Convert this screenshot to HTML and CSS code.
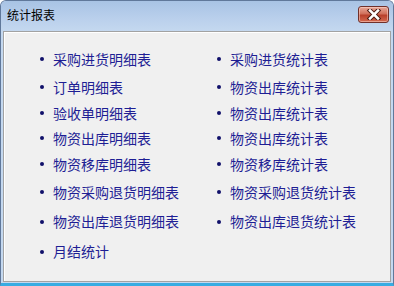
FILE: index.html
```html
<!DOCTYPE html>
<html lang="zh-CN">

<head>
    <meta charset="UTF-8">
    <meta name="viewport" content="width=device-width, initial-scale=1.0">
    <title>统计报表</title>
    <link rel="stylesheet" href="styles.css">
</head>

<body>
    <div class="window">
        <!-- 标题栏 -->
        <div class="titlebar">
            <span class="title">统计报表</span>
            <div class="close">
                <svg width="16" height="11" viewBox="0 0 16 11">
                    <path d="M4 1.5 L12 9.5 M12 1.5 L4 9.5" stroke="#4a1a12" stroke-width="4.5" stroke-linecap="square" />
                    <path d="M4 1.5 L12 9.5 M12 1.5 L4 9.5" stroke="#ffffff" stroke-width="2.5" stroke-linecap="square" />
                </svg>
            </div>
        </div>
        <!-- 报表列表 -->
        <div class="panel">
            <ul class="reports">
                <li>采购进货明细表</li>
                <li>采购进货统计表</li>
                <li>订单明细表</li>
                <li>物资出库统计表</li>
                <li>验收单明细表</li>
                <li>物资出库统计表</li>
                <li>物资出库明细表</li>
                <li>物资出库统计表</li>
                <li>物资移库明细表</li>
                <li>物资移库统计表</li>
                <li>物资采购退货明细表</li>
                <li>物资采购退货统计表</li>
                <li>物资出库退货明细表</li>
                <li>物资出库退货统计表</li>
                <li>月结统计</li>
            </ul>
        </div>
    </div>
</body>

</html>
```

FILE: styles.css
```css
:root {
    --frame-color: #c4d8ef;
    --link-color: #1e1e94;
}

* {
    margin: 0;
    padding: 0;
    box-sizing: border-box;
}

body {
    width: 394px;
    height: 286px;
    overflow: hidden;
    font-family: "Noto Sans CJK SC", "Noto Sans", sans-serif;
}

.window {
    display: flex;
    flex-direction: column;
    height: 286px;
    background: var(--frame-color);
    border: 1px solid #60789a;
    border-bottom: 3px solid #38ace2;
    border-radius: 6px 6px 0 0;
}

/* 标题栏 */
.titlebar {
    display: flex;
    align-items: center;
    justify-content: space-between;
    height: 30px;
    padding: 0 4px 4px 6px;
    background: linear-gradient(#a8c3e4, #bad0ec 60%, #c4d8ef);
    border-radius: 5px 5px 0 0;
}

.title {
    font-size: 12px;
    color: #000;
}

.close {
    display: flex;
    align-items: center;
    justify-content: center;
    width: 31px;
    height: 17px;
    border: 1px solid #70302a;
    border-radius: 3px;
    background: linear-gradient(#e8a898, #d0705c 45%, #b8402c 55%, #d46a50);
    box-shadow: inset 0 0 0 1px rgba(255, 220, 210, 0.5);
}

/* 内容区 */
.panel {
    flex: 1;
    margin: 0 2px 1px 2px;
    background: #f0f0f0;
    border: 1px solid #a2a2a2;
    box-shadow: inset 1px 1px 0 #fff;
    padding: 12px 0 0 36px;
}

.reports {
    list-style: none;
    display: grid;
    grid-template-columns: 177px 177px;
    grid-template-rows: 29px 27px 25px 25px 27px 29px 30px 30px;
}

.reports li {
    display: flex;
    align-items: center;
    gap: 9px;
    font-size: 14px;
    color: var(--link-color);
    white-space: nowrap;
}

.reports li::before {
    content: "";
    flex: none;
    width: 4px;
    height: 4px;
    margin-top: 1px;
    border-radius: 50%;
    background: #10106a;
}
```
